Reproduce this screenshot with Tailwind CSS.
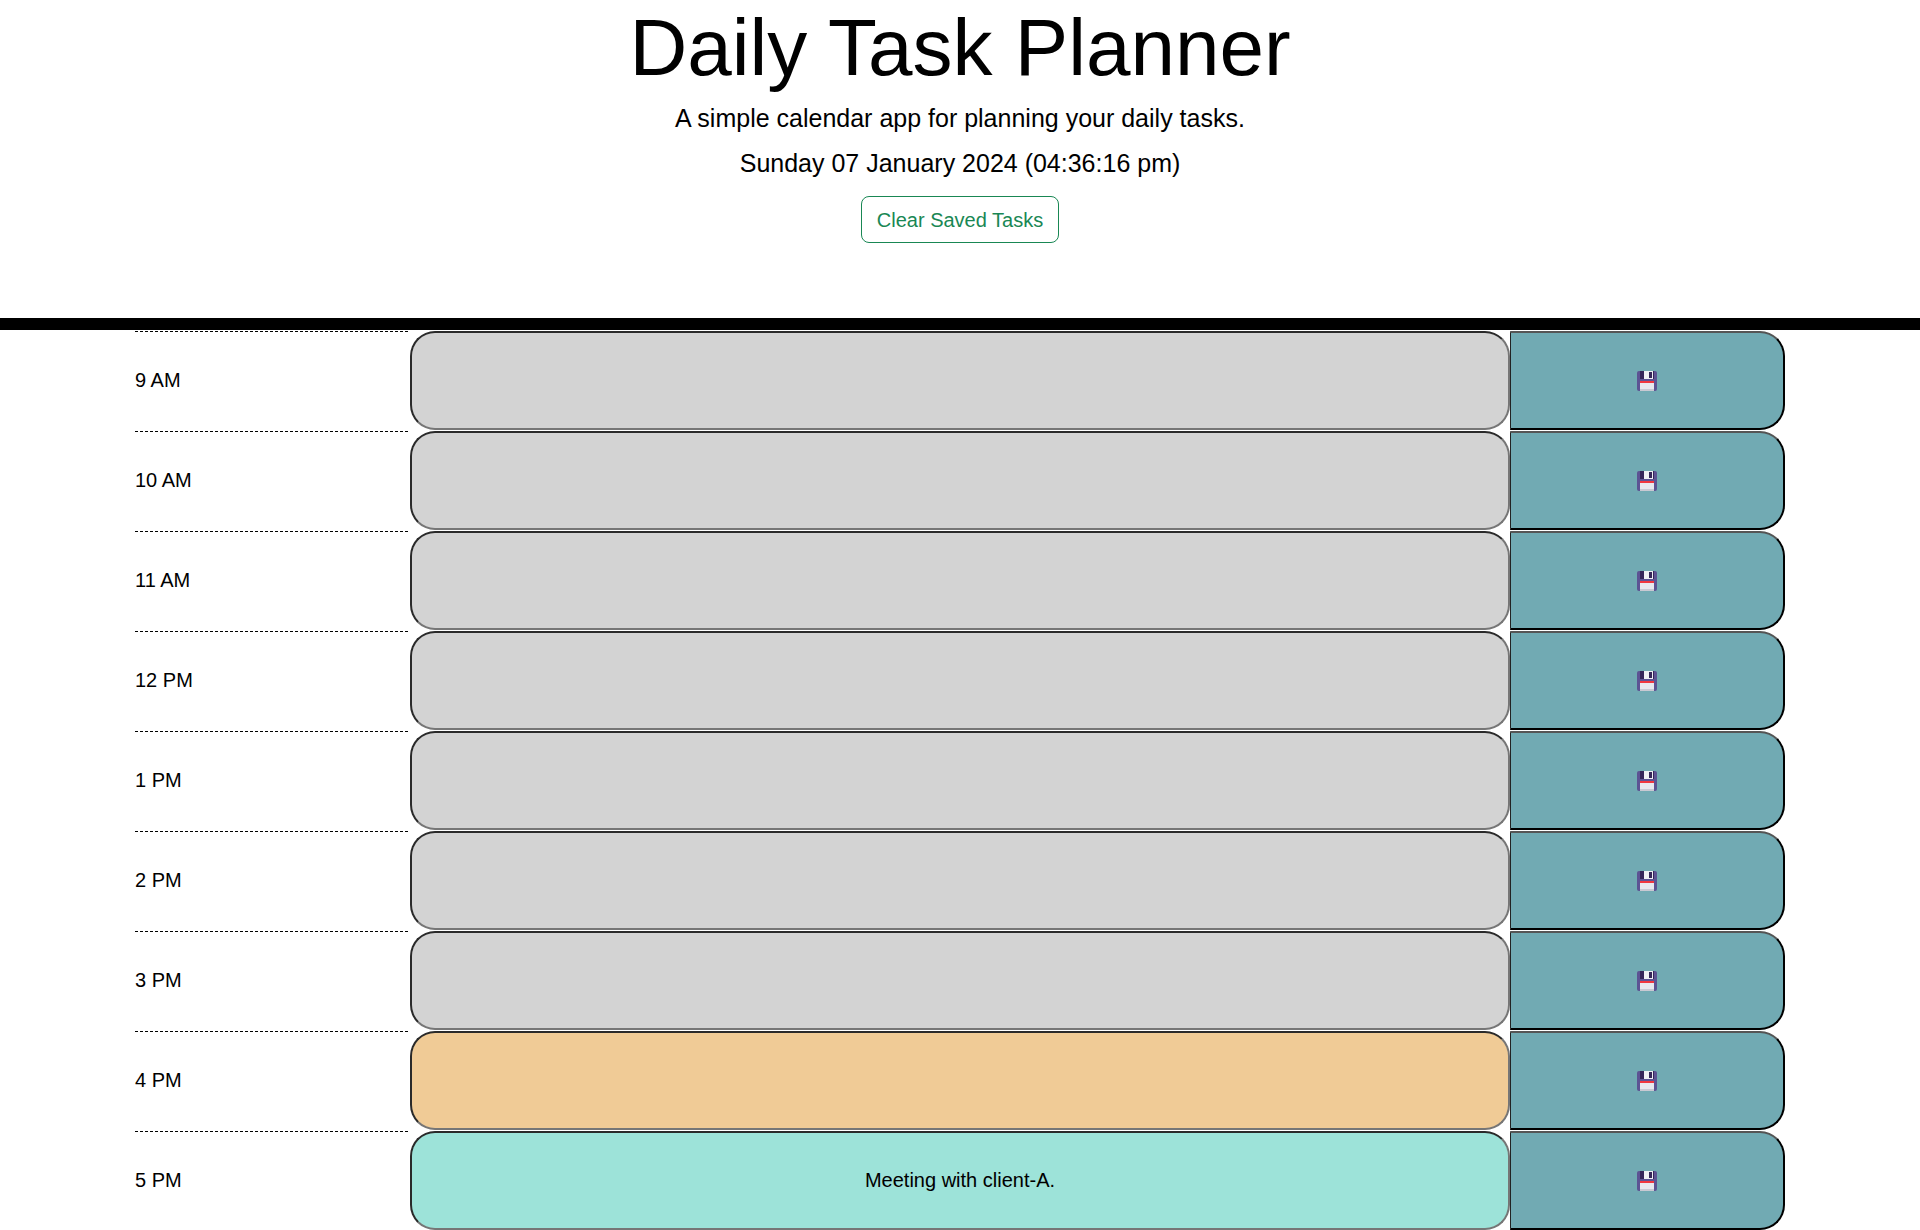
<!DOCTYPE html>
<html lang="en">
	<head>
		<title>Daily Task Planner</title>
		<meta charset="utf-8" />
		<meta name="viewport" content="width=device-width, initial-scale=1" />
		<script src="https://cdn.jsdelivr.net/npm/@tailwindcss/browser@4"></script>
	</head>
	<body class="bg-white text-black font-['Liberation_Sans',Arial,sans-serif]">
		<!-- header -->
		<header class="h-[330px] border-b-[12px] border-black text-center">
			<h1 class="text-[80px] leading-[96px] mb-1">Daily Task Planner</h1>
			<p class="text-[25px] leading-[36px] mb-[9px]">A simple calendar app for planning your daily tasks.</p>
			<p class="text-[25px] leading-[36px] mb-[15px]">Sunday 07 January 2024 (04:36:16 pm)</p>
			<button class="px-[15px] h-[47px] text-[20px] text-[#198754] border border-[#198754] rounded-lg">Clear Saved Tasks</button>
		</header>

		<!-- hour rows -->
		<main class="w-[1650px] mx-auto pt-px">
			<div class="flex h-[100px]">
				<div class="w-[275px] pt-px pb-[3px] flex items-center text-[20px] bg-[repeating-linear-gradient(90deg,#000_0_3px,transparent_3px_5px)] bg-no-repeat bg-[length:100%_1px]">9 AM</div>
				<textarea class="w-[1100px] h-[99px] pt-8 rounded-[25px] border-2 border-t-[#2a2a2a] border-l-[#2a2a2a] border-r-[#767676] border-b-[#767676] bg-[#d3d3d3] text-[20px] leading-[30px] text-center resize-none"></textarea>
				<button class="w-[275px] h-[99px] rounded-r-[25px] border-2 border-l border-t-[#555] border-l-[#222] border-r-black border-b-black bg-[#71aab3] flex items-center justify-center">
					<svg width="20" height="20" viewBox="0 0 20 20"><rect width="20" height="20" rx="2" fill="#5c5393" /><rect x="3" width="14" height="8" fill="#36265a" /><rect x="7" width="9" height="8" fill="#f1f1f5" /><rect x="12" y="1" width="3" height="6" fill="#36265a" /><rect x="3" y="10" width="14" height="10" fill="#e8e8ee" /><rect x="3" y="10" width="14" height="2" fill="#f0373f" /><rect x="3" y="18" width="14" height="2" fill="#c9c9d2" /></svg>
				</button>
			</div>
			<div class="flex h-[100px]">
				<div class="w-[275px] pt-px pb-[3px] flex items-center text-[20px] bg-[repeating-linear-gradient(90deg,#000_0_3px,transparent_3px_5px)] bg-no-repeat bg-[length:100%_1px]">10 AM</div>
				<textarea class="w-[1100px] h-[99px] pt-8 rounded-[25px] border-2 border-t-[#2a2a2a] border-l-[#2a2a2a] border-r-[#767676] border-b-[#767676] bg-[#d3d3d3] text-[20px] leading-[30px] text-center resize-none"></textarea>
				<button class="w-[275px] h-[99px] rounded-r-[25px] border-2 border-l border-t-[#555] border-l-[#222] border-r-black border-b-black bg-[#71aab3] flex items-center justify-center">
					<svg width="20" height="20" viewBox="0 0 20 20"><rect width="20" height="20" rx="2" fill="#5c5393" /><rect x="3" width="14" height="8" fill="#36265a" /><rect x="7" width="9" height="8" fill="#f1f1f5" /><rect x="12" y="1" width="3" height="6" fill="#36265a" /><rect x="3" y="10" width="14" height="10" fill="#e8e8ee" /><rect x="3" y="10" width="14" height="2" fill="#f0373f" /><rect x="3" y="18" width="14" height="2" fill="#c9c9d2" /></svg>
				</button>
			</div>
			<div class="flex h-[100px]">
				<div class="w-[275px] pt-px pb-[3px] flex items-center text-[20px] bg-[repeating-linear-gradient(90deg,#000_0_3px,transparent_3px_5px)] bg-no-repeat bg-[length:100%_1px]">11 AM</div>
				<textarea class="w-[1100px] h-[99px] pt-8 rounded-[25px] border-2 border-t-[#2a2a2a] border-l-[#2a2a2a] border-r-[#767676] border-b-[#767676] bg-[#d3d3d3] text-[20px] leading-[30px] text-center resize-none"></textarea>
				<button class="w-[275px] h-[99px] rounded-r-[25px] border-2 border-l border-t-[#555] border-l-[#222] border-r-black border-b-black bg-[#71aab3] flex items-center justify-center">
					<svg width="20" height="20" viewBox="0 0 20 20"><rect width="20" height="20" rx="2" fill="#5c5393" /><rect x="3" width="14" height="8" fill="#36265a" /><rect x="7" width="9" height="8" fill="#f1f1f5" /><rect x="12" y="1" width="3" height="6" fill="#36265a" /><rect x="3" y="10" width="14" height="10" fill="#e8e8ee" /><rect x="3" y="10" width="14" height="2" fill="#f0373f" /><rect x="3" y="18" width="14" height="2" fill="#c9c9d2" /></svg>
				</button>
			</div>
			<div class="flex h-[100px]">
				<div class="w-[275px] pt-px pb-[3px] flex items-center text-[20px] bg-[repeating-linear-gradient(90deg,#000_0_3px,transparent_3px_5px)] bg-no-repeat bg-[length:100%_1px]">12 PM</div>
				<textarea class="w-[1100px] h-[99px] pt-8 rounded-[25px] border-2 border-t-[#2a2a2a] border-l-[#2a2a2a] border-r-[#767676] border-b-[#767676] bg-[#d3d3d3] text-[20px] leading-[30px] text-center resize-none"></textarea>
				<button class="w-[275px] h-[99px] rounded-r-[25px] border-2 border-l border-t-[#555] border-l-[#222] border-r-black border-b-black bg-[#71aab3] flex items-center justify-center">
					<svg width="20" height="20" viewBox="0 0 20 20"><rect width="20" height="20" rx="2" fill="#5c5393" /><rect x="3" width="14" height="8" fill="#36265a" /><rect x="7" width="9" height="8" fill="#f1f1f5" /><rect x="12" y="1" width="3" height="6" fill="#36265a" /><rect x="3" y="10" width="14" height="10" fill="#e8e8ee" /><rect x="3" y="10" width="14" height="2" fill="#f0373f" /><rect x="3" y="18" width="14" height="2" fill="#c9c9d2" /></svg>
				</button>
			</div>
			<div class="flex h-[100px]">
				<div class="w-[275px] pt-px pb-[3px] flex items-center text-[20px] bg-[repeating-linear-gradient(90deg,#000_0_3px,transparent_3px_5px)] bg-no-repeat bg-[length:100%_1px]">1 PM</div>
				<textarea class="w-[1100px] h-[99px] pt-8 rounded-[25px] border-2 border-t-[#2a2a2a] border-l-[#2a2a2a] border-r-[#767676] border-b-[#767676] bg-[#d3d3d3] text-[20px] leading-[30px] text-center resize-none"></textarea>
				<button class="w-[275px] h-[99px] rounded-r-[25px] border-2 border-l border-t-[#555] border-l-[#222] border-r-black border-b-black bg-[#71aab3] flex items-center justify-center">
					<svg width="20" height="20" viewBox="0 0 20 20"><rect width="20" height="20" rx="2" fill="#5c5393" /><rect x="3" width="14" height="8" fill="#36265a" /><rect x="7" width="9" height="8" fill="#f1f1f5" /><rect x="12" y="1" width="3" height="6" fill="#36265a" /><rect x="3" y="10" width="14" height="10" fill="#e8e8ee" /><rect x="3" y="10" width="14" height="2" fill="#f0373f" /><rect x="3" y="18" width="14" height="2" fill="#c9c9d2" /></svg>
				</button>
			</div>
			<div class="flex h-[100px]">
				<div class="w-[275px] pt-px pb-[3px] flex items-center text-[20px] bg-[repeating-linear-gradient(90deg,#000_0_3px,transparent_3px_5px)] bg-no-repeat bg-[length:100%_1px]">2 PM</div>
				<textarea class="w-[1100px] h-[99px] pt-8 rounded-[25px] border-2 border-t-[#2a2a2a] border-l-[#2a2a2a] border-r-[#767676] border-b-[#767676] bg-[#d3d3d3] text-[20px] leading-[30px] text-center resize-none"></textarea>
				<button class="w-[275px] h-[99px] rounded-r-[25px] border-2 border-l border-t-[#555] border-l-[#222] border-r-black border-b-black bg-[#71aab3] flex items-center justify-center">
					<svg width="20" height="20" viewBox="0 0 20 20"><rect width="20" height="20" rx="2" fill="#5c5393" /><rect x="3" width="14" height="8" fill="#36265a" /><rect x="7" width="9" height="8" fill="#f1f1f5" /><rect x="12" y="1" width="3" height="6" fill="#36265a" /><rect x="3" y="10" width="14" height="10" fill="#e8e8ee" /><rect x="3" y="10" width="14" height="2" fill="#f0373f" /><rect x="3" y="18" width="14" height="2" fill="#c9c9d2" /></svg>
				</button>
			</div>
			<div class="flex h-[100px]">
				<div class="w-[275px] pt-px pb-[3px] flex items-center text-[20px] bg-[repeating-linear-gradient(90deg,#000_0_3px,transparent_3px_5px)] bg-no-repeat bg-[length:100%_1px]">3 PM</div>
				<textarea class="w-[1100px] h-[99px] pt-8 rounded-[25px] border-2 border-t-[#2a2a2a] border-l-[#2a2a2a] border-r-[#767676] border-b-[#767676] bg-[#d3d3d3] text-[20px] leading-[30px] text-center resize-none"></textarea>
				<button class="w-[275px] h-[99px] rounded-r-[25px] border-2 border-l border-t-[#555] border-l-[#222] border-r-black border-b-black bg-[#71aab3] flex items-center justify-center">
					<svg width="20" height="20" viewBox="0 0 20 20"><rect width="20" height="20" rx="2" fill="#5c5393" /><rect x="3" width="14" height="8" fill="#36265a" /><rect x="7" width="9" height="8" fill="#f1f1f5" /><rect x="12" y="1" width="3" height="6" fill="#36265a" /><rect x="3" y="10" width="14" height="10" fill="#e8e8ee" /><rect x="3" y="10" width="14" height="2" fill="#f0373f" /><rect x="3" y="18" width="14" height="2" fill="#c9c9d2" /></svg>
				</button>
			</div>
			<div class="flex h-[100px]">
				<div class="w-[275px] pt-px pb-[3px] flex items-center text-[20px] bg-[repeating-linear-gradient(90deg,#000_0_3px,transparent_3px_5px)] bg-no-repeat bg-[length:100%_1px]">4 PM</div>
				<textarea class="w-[1100px] h-[99px] pt-8 rounded-[25px] border-2 border-t-[#2a2a2a] border-l-[#2a2a2a] border-r-[#767676] border-b-[#767676] bg-[#f0cb96] text-[20px] leading-[30px] text-center resize-none"></textarea>
				<button class="w-[275px] h-[99px] rounded-r-[25px] border-2 border-l border-t-[#555] border-l-[#222] border-r-black border-b-black bg-[#71aab3] flex items-center justify-center">
					<svg width="20" height="20" viewBox="0 0 20 20"><rect width="20" height="20" rx="2" fill="#5c5393" /><rect x="3" width="14" height="8" fill="#36265a" /><rect x="7" width="9" height="8" fill="#f1f1f5" /><rect x="12" y="1" width="3" height="6" fill="#36265a" /><rect x="3" y="10" width="14" height="10" fill="#e8e8ee" /><rect x="3" y="10" width="14" height="2" fill="#f0373f" /><rect x="3" y="18" width="14" height="2" fill="#c9c9d2" /></svg>
				</button>
			</div>
			<div class="flex h-[100px]">
				<div class="w-[275px] pt-px pb-[3px] flex items-center text-[20px] bg-[repeating-linear-gradient(90deg,#000_0_3px,transparent_3px_5px)] bg-no-repeat bg-[length:100%_1px]">5 PM</div>
				<textarea class="w-[1100px] h-[99px] pt-8 rounded-[25px] border-2 border-t-[#2a2a2a] border-l-[#2a2a2a] border-r-[#767676] border-b-[#767676] bg-[#9de3d9] text-[20px] leading-[30px] text-center resize-none">Meeting with client-A.</textarea>
				<button class="w-[275px] h-[99px] rounded-r-[25px] border-2 border-l border-t-[#555] border-l-[#222] border-r-black border-b-black bg-[#71aab3] flex items-center justify-center">
					<svg width="20" height="20" viewBox="0 0 20 20"><rect width="20" height="20" rx="2" fill="#5c5393" /><rect x="3" width="14" height="8" fill="#36265a" /><rect x="7" width="9" height="8" fill="#f1f1f5" /><rect x="12" y="1" width="3" height="6" fill="#36265a" /><rect x="3" y="10" width="14" height="10" fill="#e8e8ee" /><rect x="3" y="10" width="14" height="2" fill="#f0373f" /><rect x="3" y="18" width="14" height="2" fill="#c9c9d2" /></svg>
				</button>
			</div>
		</main>
	</body>
</html>
